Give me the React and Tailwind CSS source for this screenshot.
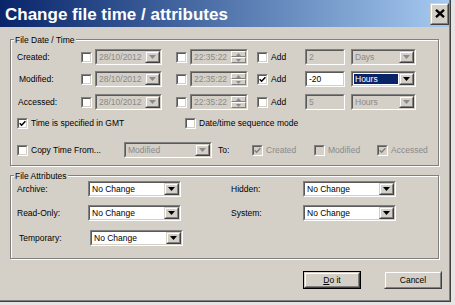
import React from "react";

const sunkenOuter = "border border-t-[#808080] border-l-[#808080] border-b-white border-r-white";
const sunkenInner = "border border-t-[#5a5a5a] border-l-[#5a5a5a] border-b-[#d4d0c8] border-r-[#d4d0c8]";
const raisedOuter = "border border-t-[#d4d0c8] border-l-[#d4d0c8] border-b-[#404040] border-r-[#404040]";
const raisedInner = "border border-t-white border-l-white border-b-[#808080] border-r-[#808080]";
const etched = "border border-[#808080] shadow-[inset_1px_1px_0_#fff,1px_1px_0_#fff]";

function Check({ checked, disabled }) {
  return (
    <div className={`w-[11px] h-[11px] shrink-0 ${sunkenOuter}`}>
      <div className={`w-full h-full flex items-center justify-center ${sunkenInner} ${disabled ? "bg-[#d4d0c8]" : "bg-white"}`}>
        {checked && (
          <svg width="7" height="7" viewBox="0 0 7 7">
            <path d="M0.7 3.2 L2.6 5.2 L6.4 1.2" stroke={disabled ? "#808080" : "#000"} strokeWidth="1.5" fill="none" />
          </svg>
        )}
      </div>
    </div>
  );
}

function Tri({ disabled, w = 7, h = 4 }) {
  return (
    <svg width={w} height={h} viewBox={`0 0 ${w} ${h}`}>
      <path d={`M0 0 L${w} 0 L${w / 2} ${h} Z`} fill={disabled ? "#8a8a8a" : "#000"} />
    </svg>
  );
}

function ArrowBtn({ disabled }) {
  return (
    <div className={`w-[15px] h-full shrink-0 bg-[#d4d0c8] ${raisedOuter}`}>
      <div className={`w-full h-full flex items-center justify-center ${raisedInner}`}>
        <Tri disabled={disabled} />
      </div>
    </div>
  );
}

function Combo({ w, text, disabled, selected }) {
  return (
    <div className={`${w} h-[16px] shrink-0 ${sunkenOuter}`}>
      <div className={`h-full flex ${sunkenInner} ${disabled ? "bg-[#d4d0c8]" : "bg-white"}`}>
        <div className="flex-1 flex min-w-0 py-[1px] pl-[1px] pr-[1px]">
          <div className={`flex-1 flex items-center pl-[1px] ${selected ? "bg-[#0a246a] text-white" : disabled ? "text-[#8a8a8a]" : "text-black"}`}>
            {text}
          </div>
        </div>
        <ArrowBtn disabled={disabled} />
      </div>
    </div>
  );
}

function SpinHalf({ up }) {
  return (
    <div className={`flex-1 bg-[#d4d0c8] ${raisedInner} flex items-center justify-center`}>
      <svg width="5" height="3" viewBox="0 0 5 3">
        <path d={up ? "M0 3 L5 3 L2.5 0 Z" : "M0 0 L5 0 L2.5 3 Z"} fill="#8a8a8a" />
      </svg>
    </div>
  );
}

function TimeField() {
  return (
    <div className={`w-[58px] h-[16px] shrink-0 ${sunkenOuter}`}>
      <div className={`h-full flex ${sunkenInner} bg-[#d4d0c8]`}>
        <div className="flex-1 flex items-center pl-[2px] text-[#8a8a8a]">22:35:22</div>
        <div className="w-[15px] h-full flex flex-col">
          <SpinHalf up />
          <SpinHalf />
        </div>
      </div>
    </div>
  );
}

function TextField({ text, disabled }) {
  return (
    <div className={`w-[40px] h-[16px] shrink-0 ${sunkenOuter}`}>
      <div className={`h-full flex items-center pl-[2px] ${sunkenInner} ${disabled ? "bg-[#d4d0c8] text-[#8a8a8a]" : "bg-white text-black"}`}>
        {text}
      </div>
    </div>
  );
}

function DateRow({ label, mt, add, num, unit, unitSel }) {
  return (
    <div className={`flex items-center h-[16px] ${mt}`}>
      <div className="w-[64px] shrink-0">{label}</div>
      <Check />
      <div className="ml-[3px]">
        <Combo w="w-[67px]" text="28/10/2012" disabled />
      </div>
      <div className="ml-[14px]">
        <Check />
      </div>
      <div className="ml-[3px]">
        <TimeField />
      </div>
      <div className="ml-[9px]">
        <Check checked={add} />
      </div>
      <div className="ml-[3px] w-[34px] shrink-0">Add</div>
      <TextField text={num} disabled={!add} />
      <div className="ml-[6px]">
        <Combo w="w-[65px]" text={unit} disabled={!add} selected={unitSel} />
      </div>
    </div>
  );
}

function AttrRow({ mt, l1, l2, pl }) {
  return (
    <div className={`flex items-center h-[16px] ${mt} ${pl}`}>
      <div className="w-[71px] shrink-0">{l1}</div>
      <Combo w="w-[93px]" text="No Change" />
      {l2 && (
        <>
          <div className="w-[50px] shrink-0" />
          <div className="w-[72px] shrink-0">{l2}</div>
          <Combo w="w-[93px]" text="No Change" />
        </>
      )}
    </div>
  );
}

function Button({ children, isDefault }) {
  const inner = (
    <div className={`w-full h-full bg-[#d4d0c8] ${raisedOuter}`}>
      <div className={`w-full h-full flex items-center justify-center ${raisedInner}`}>{children}</div>
    </div>
  );
  return isDefault ? (
    <div className="w-[58px] h-[18px] border border-black">{inner}</div>
  ) : (
    <div className="w-[58px] h-[18px]">{inner}</div>
  );
}

export default function App() {
  return (
    <div className="w-[455px] h-[305px] bg-[#e4e4e4] overflow-hidden font-['Liberation_Sans',Arial,sans-serif] text-[8.5px] leading-none text-black">
      <div className="w-[451px] h-[302px] border-r border-b border-[#404040]">
        <div className="w-full h-full bg-[#d4d0c8] border-r border-b border-[#808080] flex flex-col">
          {/* Title bar */}
          <div className="h-[27px] shrink-0 flex items-center bg-linear-to-r from-[#0a246a] to-[#a6caf0]">
            <div className="flex-1 pl-[5px] pt-[2px] text-white font-bold text-[17px] leading-none">
              Change file time / attributes
            </div>
            <div className={`w-[19px] h-[22px] bg-[#d4d0c8] ${raisedOuter}`}>
              <div className={`w-full h-full flex items-center justify-center ${raisedInner}`}>
                <svg width="10" height="9" viewBox="0 0 10 9">
                  <path d="M1 0.8 L9 8.2 M9 0.8 L1 8.2" stroke="#000" strokeWidth="2.3" />
                </svg>
              </div>
            </div>
          </div>

          {/* File Date / Time */}
          <div className={`relative ml-[10px] mt-[12px] w-[429px] h-[127px] shrink-0 ${etched} pl-[6px] pt-[9px]`}>
            <div className="absolute left-[3px] -top-[5px] px-[1px] bg-[#d4d0c8] leading-[10px]">File Date / Time</div>
            <DateRow label="Created:" mt="" add={false} num="2" unit="Days" />
            <DateRow label={<span className="pl-[2px]">Modified:</span>} mt="mt-[6px]" add num="-20" unit="Hours" unitSel />
            <DateRow label={<span className="pl-[1px]">Accessed:</span>} mt="mt-[7px]" add={false} num="5" unit="Hours" />
            <div className="flex items-center h-[16px] mt-[5px]">
              <Check checked />
              <div className="ml-[3px] w-[154px] shrink-0">Time is specified in GMT</div>
              <Check />
              <div className="ml-[3px]">Date/time sequence mode</div>
            </div>
            <div className="flex items-center h-[16px] mt-[11px]">
              <Check />
              <div className="ml-[3px] w-[93px] shrink-0">Copy Time From...</div>
              <Combo w="w-[88px]" text="Modified" disabled />
              <div className="ml-[6px] w-[34px] shrink-0">To:</div>
              <Check checked disabled />
              <div className="ml-[3px] w-[48px] shrink-0 text-[#8a8a8a]">Created</div>
              <Check disabled />
              <div className="ml-[3px] w-[49px] shrink-0 text-[#8a8a8a]">Modified</div>
              <Check checked disabled />
              <div className="ml-[3px] text-[#8a8a8a]">Accessed</div>
            </div>
          </div>

          {/* File Attributes */}
          <div className={`relative ml-[10px] mt-[9px] w-[429px] h-[84px] shrink-0 ${etched} pl-[6px] pt-[5px]`}>
            <div className="absolute left-[3px] -top-[5px] px-[1px] bg-[#d4d0c8] leading-[10px]">File Attributes</div>
            <AttrRow l1="Archive:" l2="Hidden:" mt="" pl="" />
            <AttrRow l1="Read-Only:" l2="System:" mt="mt-[8px]" pl="" />
            <AttrRow l1="Temporary:" mt="mt-[9px]" pl="pl-[2px]" />
          </div>

          {/* Buttons */}
          <div className="flex justify-end gap-[23px] pr-[7px] mt-[12px]">
            <Button isDefault>
              <span><span className="underline">D</span>o it</span>
            </Button>
            <Button>Cancel</Button>
          </div>
        </div>
      </div>
    </div>
  );
}
